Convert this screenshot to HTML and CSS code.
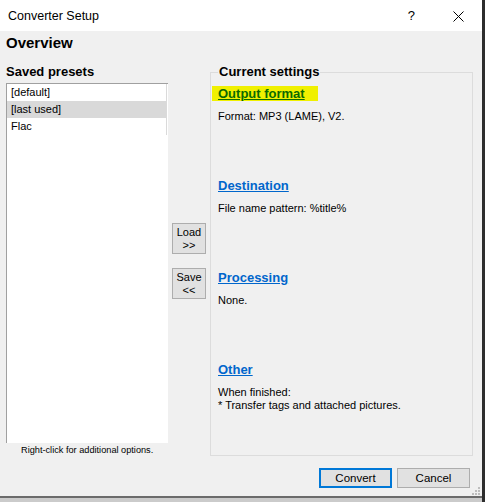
FILE: index.html
```html
<!DOCTYPE html>
<html>
<head>
<meta charset="utf-8">
<title>Converter Setup</title>
<link rel="stylesheet" href="styles.css">
</head>
<body>
<div class="window">
  <div class="titlebar">
    <span class="title">Converter Setup</span>
    <span class="help">?</span>
    <svg class="close" width="11" height="11" viewBox="0 0 11 11"><path d="M0.5 0.5L10.5 10.5M10.5 0.5L0.5 10.5" stroke="#000" stroke-width="1" fill="none"/></svg>
  </div>
  <div class="content">
    <div class="overview">Overview</div>
    <div class="main">
      <div class="presets">
        <div class="label">Saved presets</div>
        <div class="list">
          <div class="item">[default]</div>
          <div class="item sel">[last used]</div>
          <div class="item">Flac</div>
        </div>
        <div class="hint">Right-click for additional options.</div>
      </div>
      <div class="mid">
        <button class="small-btn">Load<br>&gt;&gt;</button>
        <button class="small-btn">Save<br>&lt;&lt;</button>
      </div>
      <fieldset class="group">
        <legend>Current settings</legend>
        <div class="section first">
          <div class="heading"><span class="marker">Output format</span></div>
          <div class="desc">Format: MP3 (LAME), V2.</div>
        </div>
        <div class="section">
          <div class="heading"><span class="link">Destination</span></div>
          <div class="desc">File name pattern: %title%</div>
        </div>
        <div class="section">
          <div class="heading"><span class="link">Processing</span></div>
          <div class="desc">None.</div>
        </div>
        <div class="section">
          <div class="heading"><span class="link">Other</span></div>
          <div class="desc">When finished:<br>* Transfer tags and attached pictures.</div>
        </div>
      </fieldset>
    </div>
    <div class="footer">
      <button class="btn default">Convert</button>
      <button class="btn">Cancel</button>
    </div>
  </div>
  <svg class="grip" width="8" height="8" viewBox="0 0 8 8">
    <rect x="6" y="0" width="2" height="2" fill="#bdbdbd"/>
    <rect x="3" y="3" width="2" height="2" fill="#bdbdbd"/>
    <rect x="6" y="3" width="2" height="2" fill="#bdbdbd"/>
    <rect x="0" y="6" width="2" height="2" fill="#bdbdbd"/>
    <rect x="3" y="6" width="2" height="2" fill="#bdbdbd"/>
    <rect x="6" y="6" width="2" height="2" fill="#bdbdbd"/>
  </svg>
</div>
</body>
</html>
```

FILE: styles.css
```css
html, body {
  margin: 0;
  padding: 0;
}
body {
  width: 485px;
  height: 502px;
  overflow: hidden;
  background: linear-gradient(to right, #cbcbcb 482px, #2d2d2d 482px);
}
.window {
  position: relative;
  width: 482px;
  height: 496px;
  border-bottom: 2px solid #6b6b6b;
  background: #f0f0f0;
  font-family: "Liberation Sans", Arial, sans-serif;
  font-size: 11px;
  color: #000;
}
.titlebar {
  box-sizing: border-box;
  height: 31px;
  background: #fff;
  display: flex;
  align-items: flex-start;
  padding: 9px 18px 0 8px;
}
.title {
  flex: 1;
  font-size: 12.5px;
  line-height: 15px;
}
.help {
  font-size: 13px;
  line-height: 15px;
  margin-top: -1px;
  margin-right: 38px;
}
.close {
  margin-top: 2px;
}
.content {
  padding: 0 6px;
}
.overview {
  font-size: 15px;
  font-weight: bold;
  line-height: 18px;
  margin-top: 3px;
}
.main {
  display: flex;
  align-items: flex-start;
  margin-top: 12px;
}
.presets {
  width: 162px;
}
.label {
  font-size: 13px;
  font-weight: bold;
  line-height: 16px;
}
.list {
  box-sizing: border-box;
  margin-top: 3px;
  height: 360px;
  background: #fff;
  border-top: 1px solid #a0a0a0;
  border-left: 1px solid #a0a0a0;
}
.item {
  box-sizing: border-box;
  width: 160px;
  height: 17px;
  line-height: 17px;
  padding-left: 4px;
  border-right: 1px solid #dadada;
}
.item.sel {
  background: #d9d9d9;
}
.hint {
  font-size: 9.2px;
  line-height: 12px;
  margin-top: 1px;
  padding-left: 15px;
}
.mid {
  width: 34px;
  margin-left: 4px;
  display: flex;
  flex-direction: column;
  gap: 14px;
  padding-top: 159px;
}
.small-btn {
  width: 34px;
  height: 31px;
  padding: 0;
  margin: 0;
  background: #e1e1e1;
  border: 1px solid #adadad;
  font-family: "Liberation Sans", Arial, sans-serif;
  font-size: 11px;
  line-height: 13px;
  color: #000;
}
.group {
  box-sizing: border-box;
  width: 263px;
  height: 392px;
  margin: 0 0 0 4px;
  padding: 0 7px;
  border: 1px solid #dcdcdc;
  min-width: 0;
}
.group legend {
  padding: 0 1px;
  font-size: 13px;
  font-weight: bold;
  line-height: 16px;
}
.section {
  height: 92px;
}
.section.first {
  padding-top: 6px;
}
.heading {
  font-size: 13px;
  font-weight: bold;
  line-height: 16px;
}
.link {
  color: #0066cc;
  text-decoration: underline;
}
.marker {
  color: #0a6a00;
  text-decoration: underline;
  background: #f0f000;
  padding: 0 13px 0 6px;
  margin-left: -6px;
}
.desc {
  margin-top: 8px;
  line-height: 13px;
}
.footer {
  display: flex;
  justify-content: flex-end;
  gap: 5px;
  margin-top: 12px;
  padding-right: 6px;
}
.btn {
  box-sizing: border-box;
  width: 73px;
  height: 20px;
  padding: 0;
  margin: 0;
  background: #e1e1e1;
  border: 1px solid #adadad;
  font-family: "Liberation Sans", Arial, sans-serif;
  font-size: 11.5px;
  color: #000;
}
.btn.default {
  border: 2px solid #0078d7;
}
.grip {
  position: absolute;
  right: 2px;
  bottom: 1px;
}
```
